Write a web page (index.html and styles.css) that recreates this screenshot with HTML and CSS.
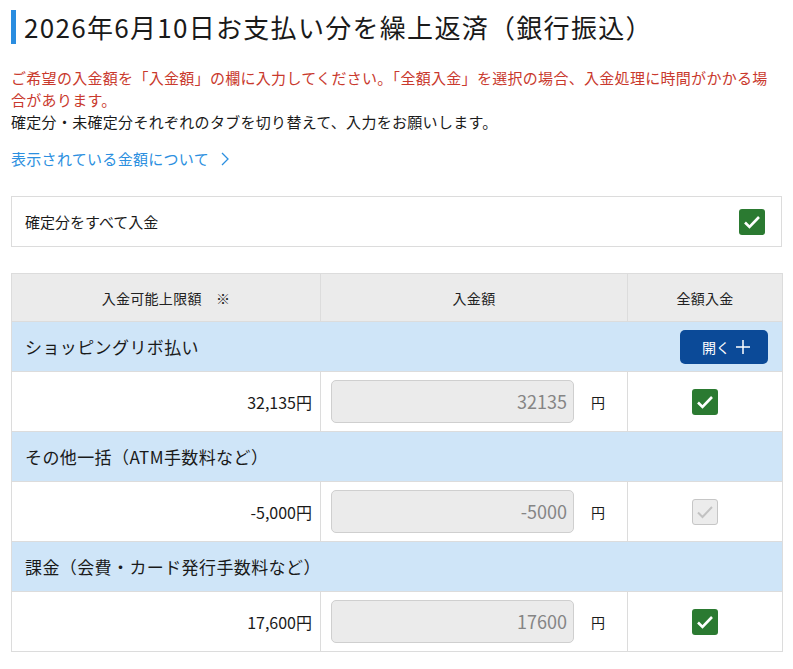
FILE: index.html
```html
<!DOCTYPE html>
<html lang="ja">
<head>
<meta charset="utf-8">
<title>繰上返済</title>
<link rel="stylesheet" href="styles.css">
</head>
<body>
  <div class="page">
    <h1 class="title">2026年6月10日お支払い分を繰上返済（銀行振込）</h1>

    <p class="note">ご希望の入金額を「入金額」の欄に入力してください。「全額入金」を選択の場合、入金処理に時間がかかる場合があります。</p>
    <p class="guide">確定分・未確定分それぞれのタブを切り替えて、入力をお願いします。</p>

    <a class="more" href="#">表示されている金額について
      <svg class="chev" width="8" height="14" viewBox="0 0 8 14"><path d="M1 1l6 6-6 6" fill="none" stroke="#2b8fe0" stroke-width="1.3"/></svg>
    </a>

    <div class="allbox">
      <span>確定分をすべて入金</span>
      <span class="check on"><svg viewBox="0 0 26 26"><path d="M6 13.5l4.5 4.5 9.5-10" fill="none" stroke="#fff" stroke-width="2.6"/></svg></span>
    </div>

    <table class="pay">
      <thead>
        <tr>
          <th class="c1">入金可能上限額　※</th>
          <th class="c2">入金額</th>
          <th class="c3">全額入金</th>
        </tr>
      </thead>
      <tbody>
        <tr class="sec">
          <td colspan="3">
            <div class="sec-in">
              <span>ショッピングリボ払い</span>
              <button class="open">開く<svg width="14" height="14" viewBox="0 0 14 14"><path d="M7 0v14M0 7h14" stroke="#fff" stroke-width="1.5"/></svg></button>
            </div>
          </td>
        </tr>
        <tr class="row">
          <td class="amt">32,135円</td>
          <td class="inp"><div class="field">32135</div><span class="yen">円</span></td>
          <td class="chk"><span class="check on"><svg viewBox="0 0 26 26"><path d="M6 13.5l4.5 4.5 9.5-10" fill="none" stroke="#fff" stroke-width="2.6"/></svg></span></td>
        </tr>
        <tr class="sec">
          <td colspan="3"><div class="sec-in"><span>その他一括（ATM手数料など）</span></div></td>
        </tr>
        <tr class="row">
          <td class="amt">-5,000円</td>
          <td class="inp"><div class="field">-5000</div><span class="yen">円</span></td>
          <td class="chk"><span class="check off"><svg viewBox="0 0 24 24"><path d="M5 12.5l4.5 4.5 9.5-10" fill="none" stroke="#c2c2c2" stroke-width="2"/></svg></span></td>
        </tr>
        <tr class="sec">
          <td colspan="3"><div class="sec-in"><span>課金（会費・カード発行手数料など）</span></div></td>
        </tr>
        <tr class="row">
          <td class="amt">17,600円</td>
          <td class="inp"><div class="field">17600</div><span class="yen">円</span></td>
          <td class="chk"><span class="check on"><svg viewBox="0 0 26 26"><path d="M6 13.5l4.5 4.5 9.5-10" fill="none" stroke="#fff" stroke-width="2.6"/></svg></span></td>
        </tr>
      </tbody>
    </table>
  </div>
</body>
</html>
```

FILE: styles.css
```css
* {
  box-sizing: border-box;
  font-family: "Noto Sans CJK JP", "Noto Sans", sans-serif;
}

body {
  margin: 0;
  background: #fff;
  color: #222;
}

.page {
  padding: 10px 11px 0 11px;
}

.title {
  margin: 0;
  border-left: 5px solid #2a8de0;
  padding-left: 8px;
  font-size: 26px;
  font-weight: normal;
  letter-spacing: 1.3px;
  line-height: 34px;
  color: #1a1a1a;
}

.note {
  margin: 23px 0 0 0;
  font-size: 15px;
  letter-spacing: 0.3px;
  line-height: 22px;
  color: #c9392d;
}

.guide {
  margin: 0;
  font-size: 15px;
  letter-spacing: 0.3px;
  line-height: 22px;
  color: #1a1a1a;
}

.more {
  display: inline-flex;
  align-items: center;
  gap: 12px;
  margin-top: 15px;
  font-size: 15px;
  letter-spacing: 0.3px;
  line-height: 22px;
  color: #2b8fe0;
  text-decoration: none;
}

.allbox {
  display: flex;
  justify-content: space-between;
  align-items: center;
  margin-top: 26px;
  height: 51px;
  border: 1px solid #dcdcdc;
  padding: 0 16px 0 13px;
  font-size: 15px;
  color: #1a1a1a;
}

.check {
  display: inline-block;
  width: 26px;
  height: 26px;
  border-radius: 3px;
}
.check svg {
  display: block;
  width: 26px;
  height: 26px;
}
.check.on {
  background: #2b7a31;
}
.check.off {
  background: #ececec;
  border: 1px solid #c6c6c6;
}
.check.off svg {
  width: 24px;
  height: 24px;
}

.pay {
  margin-top: 26px;
  width: 771px;
  border-collapse: collapse;
  table-layout: fixed;
}

.pay th, .pay td {
  border: 1px solid #dcdcdc;
  padding: 0;
}

.pay th {
  height: 48px;
  background: #ebebeb;
  font-size: 14px;
  font-weight: normal;
  letter-spacing: 0.3px;
  color: #222;
}
.c1 { width: 309px; }
.c2 { width: 307px; }
.c3 { width: 155px; }

.sec td {
  height: 50px;
  background: #cfe5f8;
}
.sec-in {
  display: flex;
  justify-content: space-between;
  align-items: center;
  padding: 0 14px 0 13px;
  font-size: 17px;
  letter-spacing: 0.4px;
  color: #1a1a1a;
}

.open {
  display: flex;
  align-items: center;
  justify-content: center;
  gap: 6px;
  width: 88px;
  height: 34px;
  border: none;
  border-radius: 5px;
  background: #0b4a98;
  color: #fff;
  font-size: 14px;
  padding: 0 0 0 4px;
}

.row td {
  height: 60px;
  background: #fff;
}
.amt {
  text-align: right;
  padding-right: 8px !important;
  font-size: 16px;
  color: #1a1a1a;
}
.inp {
  padding-left: 10px !important;
}
.inp .field, .inp .yen {
  display: inline-block;
  vertical-align: middle;
}
.field {
  width: 243px;
  height: 43px;
  line-height: 41px;
  border: 1px solid #cfcfcf;
  border-radius: 5px;
  background: #ebebeb;
  text-align: right;
  padding-right: 6px;
  font-size: 18px;
  color: #858585;
}
.yen {
  margin-left: 17px;
  font-size: 14px;
  color: #1a1a1a;
}
.chk {
  text-align: center;
}
.chk .check {
  vertical-align: middle;
}
```
